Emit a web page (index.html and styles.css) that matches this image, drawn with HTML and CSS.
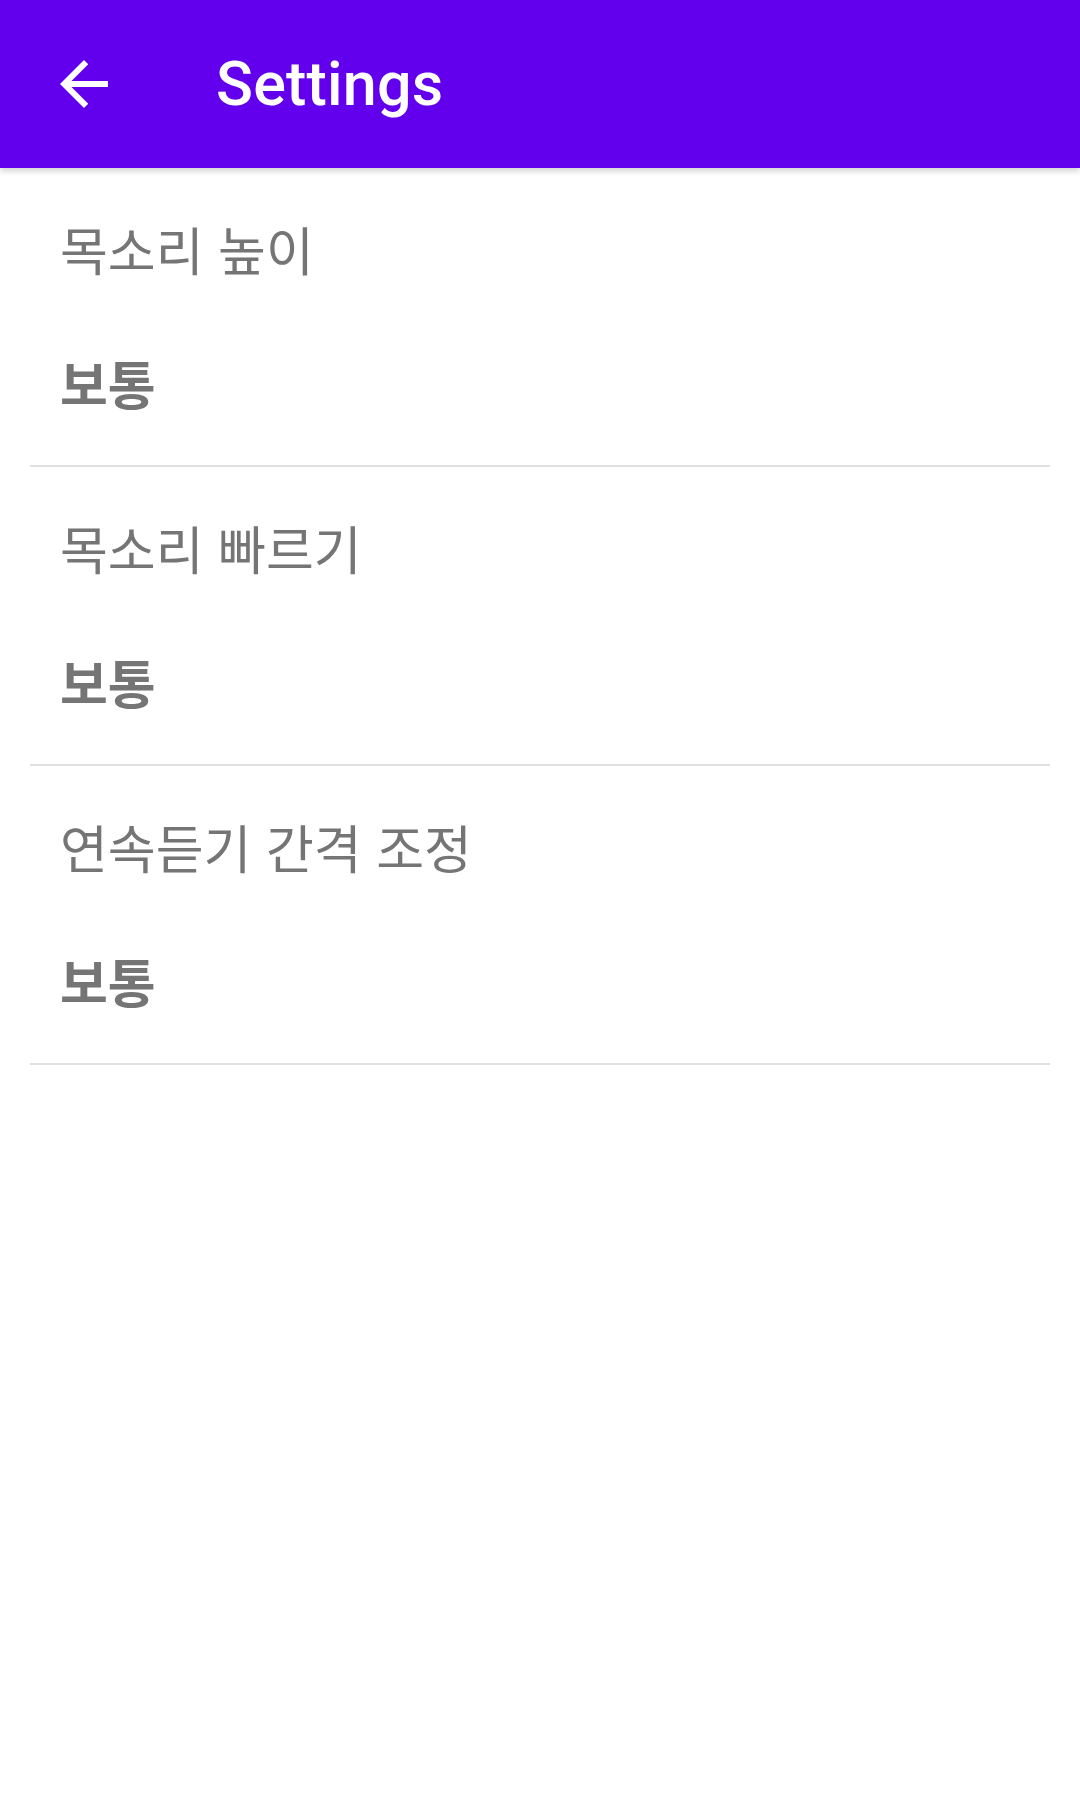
FILE: index.html
```html
<!DOCTYPE html>
<html lang="ko">
<head>
<meta charset="utf-8">
<title>Settings</title>
<link rel="stylesheet" href="styles.css">
</head>
<body>
<header class="appbar">
  <button class="back" aria-label="Back">
    <svg viewBox="0 0 24 24" width="72" height="72"><path fill="#ffffff" d="M20 11H7.83l5.59-5.59L12 4l-8 8 8 8 1.41-1.41L7.83 13H20v-2z"/></svg>
  </button>
  <h1 class="title">Settings</h1>
</header>
<main class="list">
  <section class="pref">
    <div class="pref-title">목소리 높이</div>
    <div class="pref-summary">보통</div>
  </section>
  <div class="divider"></div>
  <section class="pref">
    <div class="pref-title">목소리 빠르기</div>
    <div class="pref-summary">보통</div>
  </section>
  <div class="divider"></div>
  <section class="pref">
    <div class="pref-title">연속듣기 간격 조정</div>
    <div class="pref-summary">보통</div>
  </section>
  <div class="divider"></div>
</main>
</body>
</html>
```
FILE: styles.css
```css
html, body {
  margin: 0;
  padding: 0;
  background: #ffffff;
}
body {
  width: 1080px;
  min-height: 1817px;
  font-family: "Noto Sans CJK KR", Roboto, sans-serif;
}
.appbar {
  height: 168px;
  background: #6200ee;
  display: flex;
  align-items: center;
  padding-left: 48px;
  box-sizing: border-box;
  box-shadow: 0 3px 6px rgba(0, 0, 0, 0.18);
  position: relative;
  z-index: 1;
}
.back {
  width: 72px;
  height: 72px;
  padding: 0;
  border: 0;
  background: none;
  display: flex;
}
.title {
  margin: 0 0 0 96px;
  font-family: Roboto, "Noto Sans CJK KR", sans-serif;
  font-weight: 500;
  font-size: 61px;
  line-height: 72px;
  color: #ffffff;
  letter-spacing: 0.2px;
}
.list {
  display: flex;
  flex-direction: column;
}
.pref {
  padding: 51px 60px 52px;
  display: flex;
  flex-direction: column;
  gap: 74px;
}
.pref-title,
.pref-summary {
  font-size: 52px;
  line-height: 60px;
  color: #757575;
}
.pref-title {
  font-weight: 400;
}
.pref-summary {
  font-weight: 700;
}
.divider {
  height: 2px;
  margin: 0 30px;
  background: #e0e0e0;
}
```
